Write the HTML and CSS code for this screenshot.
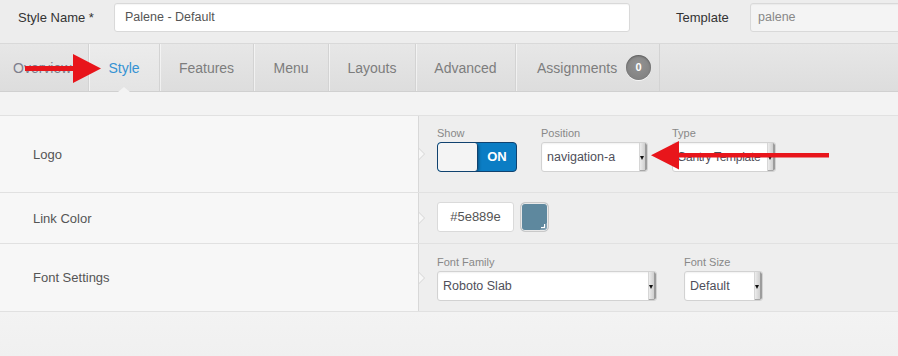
FILE: index.html
```html
<!DOCTYPE html>
<html>
<head>
<meta charset="utf-8">
<link rel="stylesheet" href="styles.css">
</head>
<body>
<div class="page">
  <div class="topbar">
    <div class="top-label name-label">Style Name *</div>
    <div class="text-input name-input">Palene - Default</div>
    <div class="top-label tpl-label">Template</div>
    <div class="text-input tpl-input">palene</div>
  </div>
  <nav class="tabs">
    <div class="tab tab-overview">Overview</div>
    <div class="tab tab-style active">Style</div>
    <div class="tab tab-features">Features</div>
    <div class="tab tab-menu">Menu</div>
    <div class="tab tab-layouts">Layouts</div>
    <div class="tab tab-advanced">Advanced</div>
    <div class="tab tab-assign">Assignments <span class="badge">0</span></div>
  </nav>
  <div class="spacer"></div>
  <div class="rows">
    <div class="row row-logo">
      <div class="lcol">Logo</div>
      <div class="rcol">
        <div class="fields">
          <div class="field">
            <div class="flabel">Show</div>
            <div class="toggle"><span class="knob"></span><span class="on">ON</span></div>
          </div>
          <div class="field">
            <div class="flabel">Position</div>
            <div class="select w-pos"><span class="val">navigation-a</span><span class="caret"></span></div>
          </div>
          <div class="field">
            <div class="flabel">Type</div>
            <div class="select w-type"><span class="val val-tight">Gantry Template</span><span class="caret"></span></div>
          </div>
        </div>
      </div>
    </div>
    <div class="row row-color">
      <div class="lcol">Link Color</div>
      <div class="rcol">
        <div class="colorline">
          <div class="color-input">#5e889e</div>
          <div class="swatch"></div>
        </div>
      </div>
    </div>
    <div class="row row-font">
      <div class="lcol">Font Settings</div>
      <div class="rcol">
        <div class="fields fields-font">
          <div class="field">
            <div class="flabel">Font Family</div>
            <div class="select w-family"><span class="val">Roboto Slab</span><span class="caret"></span></div>
          </div>
          <div class="field">
            <div class="flabel">Font Size</div>
            <div class="select w-size"><span class="val">Default</span><span class="caret"></span></div>
          </div>
        </div>
      </div>
    </div>
  </div>
  <div class="foot"></div>
  <svg class="arrows" width="898" height="356" viewBox="0 0 898 356">
    <polygon points="25,66 73,66 73,54 101,68.5 73,83 73,71 25,71" fill="#e8151b"/>
    <polygon points="829,153 679,153 679,141 651,155.3 679,169.5 679,157.5 829,157.5" fill="#e8151b"/>
  </svg>
</div>
</body>
</html>
```
FILE: styles.css
```css
html, body {
  margin: 0;
  padding: 0;
}
body {
  font-family: "Liberation Sans", Arial, sans-serif;
  background: #f1f1f1;
  width: 898px;
  height: 356px;
  overflow: hidden;
}
.page {
  position: relative;
  width: 898px;
  height: 356px;
  overflow: hidden;
}

/* top bar */
.topbar {
  display: flex;
  align-items: flex-start;
  height: 44px;
  box-sizing: border-box;
  padding-top: 3px;
  background: #ededed;
  border-bottom: 1px solid #d9d9d9;
}
.top-label {
  font-size: 13px;
  color: #333;
  line-height: 29px;
  flex: none;
}
.name-label {
  padding-left: 18px;
  width: 96px;
}
.tpl-label {
  margin-left: 46px;
  width: 74px;
}
.text-input {
  flex: none;
  box-sizing: border-box;
  height: 29px;
  line-height: 27px;
  border: 1px solid #d9d9d9;
  border-radius: 3px;
  background: #fff;
  font-size: 12.5px;
  color: #555;
  padding: 0 10px;
  box-shadow: inset 0 1px 1px rgba(0,0,0,.04);
}
.name-input {
  width: 516px;
}
.tpl-input {
  width: 180px;
  background: #f4f4f4;
  color: #888;
  padding-left: 7px;
}

/* tabs */
.tabs {
  display: flex;
  height: 48px;
  box-sizing: border-box;
  background: linear-gradient(#e7e7e7, #dddddd);
  border-bottom: 1px solid #d0d0d0;
}
.tab {
  position: relative;
  flex: none;
  box-sizing: border-box;
  display: flex;
  align-items: center;
  justify-content: center;
  font-size: 14px;
  color: #7d7d7d;
  border-right: 1px solid #d3d3d3;
  box-shadow: inset 1px 0 0 rgba(255,255,255,.55);
  white-space: nowrap;
}
.tab-overview {
  width: 89px;
  justify-content: flex-start;
  padding-left: 13px;
  color: #7e7e8c;
  box-shadow: none;
}
.tab-style { width: 71px; }
.tab-features { width: 94px; }
.tab-menu { width: 75px; }
.tab-layouts { width: 87px; }
.tab-advanced { width: 100px; }
.tab-assign {
  width: 144px;
  justify-content: flex-start;
  padding-left: 21px;
}
.tab.active {
  color: #3592d3;
  background: linear-gradient(#ececec, #e4e4e4);
}
.tab.active::after {
  content: "";
  position: absolute;
  left: 50%;
  bottom: -1px;
  margin-left: -6px;
  border-left: 6px solid transparent;
  border-right: 6px solid transparent;
  border-bottom: 5px solid #f3f3f3;
}
.badge {
  display: inline-block;
  width: 25px;
  height: 25px;
  line-height: 25px;
  margin-left: 9px;
  border-radius: 50%;
  background: radial-gradient(circle at 50% 40%, #939393, #7c7c7c);
  color: #fff;
  font-size: 11px;
  font-weight: bold;
  text-align: center;
  box-shadow: inset 0 1px 2px rgba(0,0,0,.35), 0 1px 0 rgba(255,255,255,.7);
}

/* spacer */
.spacer {
  height: 23px;
  background: #f3f3f3;
  border-bottom: 1px solid #e1e1e1;
}

/* rows */
.row {
  display: flex;
  border-bottom: 1px solid #e1e1e1;
}
.row-logo { height: 76px; }
.row-color { height: 50px; }
.row-font { height: 67px; }
.lcol {
  width: 418px;
  flex: none;
  box-sizing: border-box;
  padding-left: 33px;
  background: #f7f7f7;
  display: flex;
  align-items: center;
  font-size: 13px;
  color: #555;
}
.rcol {
  position: relative;
  flex: 1;
  background: #eeeeee;
  border-left: 1px solid #d8d8d8;
  padding-left: 18px;
}
.rcol::before {
  content: "";
  position: absolute;
  left: 0;
  top: 50%;
  margin-top: -6px;
  border-top: 6px solid transparent;
  border-bottom: 6px solid transparent;
  border-left: 6px solid #d4d4d4;
}
.rcol::after {
  content: "";
  position: absolute;
  left: 0;
  top: 50%;
  margin-top: -5px;
  border-top: 5px solid transparent;
  border-bottom: 5px solid transparent;
  border-left: 5px solid #f7f7f7;
}
.row-logo .rcol { padding-top: 10px; }
.row-color .rcol { padding-top: 9px; }
.row-font .rcol { padding-top: 11px; }

.fields {
  display: flex;
  gap: 24px;
}
.fields-font {
  gap: 27px;
}
.field {
  display: flex;
  flex-direction: column;
}
.flabel {
  font-size: 11px;
  line-height: 14px;
  color: #888;
  margin-bottom: 2px;
}

/* toggle */
.toggle {
  display: flex;
  width: 80px;
  height: 30px;
  box-sizing: border-box;
  border: 1px solid #10426f;
  border-radius: 4px;
  background: #0b7dc4;
  overflow: hidden;
}
.knob {
  width: 39px;
  background: #f4f4f4;
  border-right: 1px solid #10426f;
  border-radius: 3px;
  box-shadow: 1px 1px 3px rgba(0,0,0,.35);
}
.on {
  flex: 1;
  color: #fff;
  font-weight: bold;
  font-size: 13px;
  line-height: 28px;
  text-align: center;
}

/* selects */
.select {
  display: flex;
  align-items: center;
  height: 30px;
  box-sizing: border-box;
  border: 1px solid #d2d2d2;
  border-radius: 3px;
  background: #fff;
  overflow: hidden;
  box-shadow: inset 0 1px 2px rgba(0,0,0,.06);
}
.val {
  flex: 1;
  padding-left: 5px;
  font-size: 12.5px;
  color: #4f4f5a;
  white-space: nowrap;
  overflow: hidden;
}
.val-tight {
  font-size: 12px;
  padding-left: 4px;
  letter-spacing: -0.3px;
}
.caret {
  position: relative;
  flex: none;
  align-self: stretch;
  width: 5px;
  background: linear-gradient(to right, #ececec, #cfcfcf);
  border-left: 1px solid #d6d6d6;
  border-right: 2px solid #9c9c9c;
  border-bottom: 1px solid #a8a8a8;
  border-radius: 0 2px 2px 0;
}
.caret::after {
  content: "";
  position: absolute;
  left: 0;
  top: 50%;
  margin-top: -1px;
  border-top: 4px solid #111;
  border-left: 2px solid transparent;
  border-right: 2px solid transparent;
}
.w-pos { width: 107px; }
.w-type { width: 104px; }
.w-family { width: 220px; }
.w-size { width: 79px; }

/* color */
.colorline {
  display: flex;
  gap: 6px;
}
.color-input {
  width: 77px;
  height: 30px;
  box-sizing: border-box;
  border: 1px solid #dadada;
  border-radius: 3px;
  background: #fff;
  font-size: 13px;
  color: #555;
  text-align: center;
  line-height: 28px;
}
.swatch {
  position: relative;
  width: 29px;
  height: 30px;
  box-sizing: border-box;
  border: 1px solid #c9c9c9;
  border-radius: 5px;
  background: linear-gradient(135deg, #5e889e 82%, #7c9caf 82%);
  box-shadow: inset 0 0 0 1px #e9e9e9;
}
.swatch::after {
  content: "";
  position: absolute;
  right: 3px;
  bottom: 3px;
  width: 3px;
  height: 3px;
  border-right: 1px solid #fff;
  border-bottom: 1px solid #fff;
}

.foot {
  height: 45px;
  background: linear-gradient(#f3f3f3, #f0f0f0);
}

.arrows {
  position: absolute;
  left: 0;
  top: 0;
  pointer-events: none;
}
```
